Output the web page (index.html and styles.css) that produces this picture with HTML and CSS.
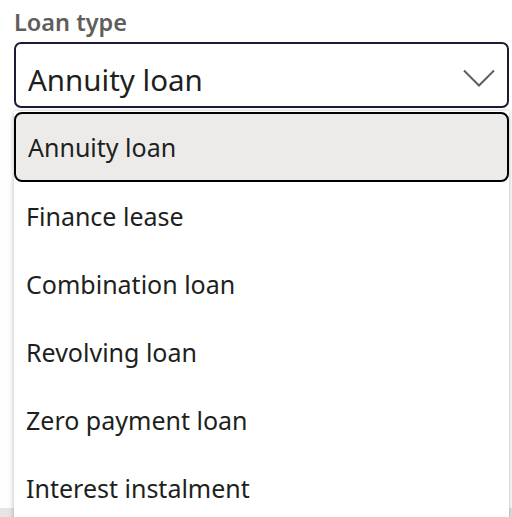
FILE: index.html
```html
<!DOCTYPE html>
<html lang="en">
<head>
<meta charset="utf-8">
<title>Loan type</title>
<link rel="stylesheet" href="styles.css">
</head>
<body>
<div class="page">
  <div class="field">
    <div class="label">Loan type</div>
    <div class="select">
      <span class="value">Annuity loan</span>
      <svg class="chevron" width="32" height="18" viewBox="0 0 32 18" aria-hidden="true">
        <polyline points="1,1.5 16,16.5 31,1.5" fill="none" stroke="#605e5c" stroke-width="2"/>
      </svg>
    </div>
    <ul class="menu">
      <li class="option selected">Annuity loan</li>
      <li class="option">Finance lease</li>
      <li class="option">Combination loan</li>
      <li class="option">Revolving loan</li>
      <li class="option">Zero payment loan</li>
      <li class="option">Interest instalment</li>
    </ul>
  </div>
  <div class="below"></div>
</div>
</body>
</html>
```
FILE: styles.css
```css
html, body {
  margin: 0;
  padding: 0;
  background: #ffffff;
}
.page {
  width: 512px;
  height: 517px;
  overflow: hidden;
  font-family: "Noto Sans", "Open Sans", sans-serif;
  color: #201f1e;
}
.field {
  position: relative;
  padding: 7px 3px 0 14px;
}
.label {
  font-size: 23.5px;
  font-weight: 600;
  line-height: 30px;
  color: #605e5c;
  margin-bottom: 5px;
}
.select {
  box-sizing: border-box;
  height: 66px;
  border: 2px solid #1b1d36;
  border-radius: 7px;
  display: flex;
  align-items: center;
  justify-content: space-between;
  padding: 0 12px 0 12px;
  background: #fff;
}
.value {
  font-size: 29.5px;
  line-height: 1;
  padding-top: 10px;
}
.chevron {
  display: block;
  margin-top: 5px;
}
.menu {
  position: absolute;
  top: 111px;
  left: 14px;
  right: 3px;
  margin: 0;
  padding: 1px 0 0 0;
  list-style: none;
  background: #fff;
  border-radius: 0 0 8px 8px;
  box-shadow: 0 0 4px rgba(0,0,0,0.18), 0 3px 8px rgba(0,0,0,0.12);
  height: 420px;
}
.option {
  box-sizing: border-box;
  height: 68px;
  display: flex;
  align-items: center;
  padding: 0 12px;
  font-size: 25px;
}
.option.selected {
  height: 70px;
  border: 2px solid #000;
  border-radius: 8px;
  background: #edebe9;
}
.below {
  height: 20px;
  margin-top: 400px;
  background: #e6e6e6;
}
```
